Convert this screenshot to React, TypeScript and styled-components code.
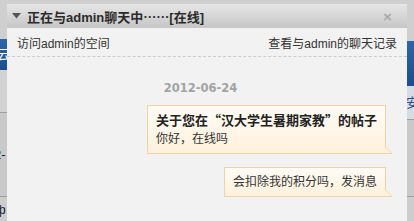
import styled, { createGlobalStyle } from "styled-components"

const GlobalStyle = createGlobalStyle`
  html, body {
    margin: 0;
    padding: 0;
    background: #cfcfcf;
  }
  body {
    font-family: "Liberation Sans", "Noto Sans CJK SC", sans-serif;
    font-size: 12px;
    color: #333;
  }
`

type StripProps = {
  $h: number
  $bg: string
  $line?: boolean
}

const Page = styled.div`
  position: relative;
  width: 414px;
  height: 221px;
  overflow: hidden;
  background: #cfcfcf;
`

const Backdrop = styled.div`
  display: grid;
  grid-template-columns: 7px 1fr 7px;
  height: 100%;
`

const SideColumn = styled.div`
  display: flex;
  flex-direction: column;
  overflow: hidden;
`

const Strip = styled.div<StripProps>`
  height: ${({ $h }) => $h}px;
  flex-shrink: 0;
  background: ${({ $bg }) => $bg};
  border-bottom: ${({ $line }) => ($line ? "1px solid #9e9e9e" : "none")};
  overflow: hidden;
  white-space: nowrap;
  font-size: 13px;
  line-height: ${({ $h }) => $h}px;
`

const BlueStrip = styled(Strip)`
  background: linear-gradient(#2f66a8, #1d4d8c);
  color: #fff;
`

const SideText = styled.span<{ $color: string; $shift: number }>`
  display: inline-block;
  margin-left: ${({ $shift }) => $shift}px;
  color: ${({ $color }) => $color};
`

const Window = styled.div`
  position: absolute;
  top: 4px;
  left: 7px;
  width: 400px;
  bottom: 0;
  background: #f2f2f2;
  display: flex;
  flex-direction: column;
`

const Header = styled.div`
  height: 24px;
  display: flex;
  align-items: center;
  padding: 0 14px 0 5px;
  background: linear-gradient(#e6e6e6, #c6c6c6);
`

const Title = styled.h2`
  margin: 0 0 0 6px;
  font-size: 13px;
  font-weight: bold;
  color: #2b2b2b;
  white-space: nowrap;
`

// full-width punctuation (quotes, ellipsis) drawn by the CJK face
const Cjk = styled.span`
  font-family: "Noto Sans CJK SC", sans-serif;
`

const CloseButton = styled.span`
  margin-left: auto;
  color: #a8a8a8;
  font-family: "DejaVu Sans", sans-serif;
  font-size: 13px;
  font-weight: bold;
  cursor: pointer;
`

const LinkRow = styled.div`
  height: 28px;
  display: flex;
  align-items: center;
  justify-content: space-between;
  padding: 0 10px 0 10px;
  border-bottom: 1px dashed #cccccc;
`

const Link = styled.a`
  color: #333;
  text-decoration: none;
  font-size: 12px;
  cursor: pointer;
`

const Messages = styled.div`
  display: flex;
  flex-direction: column;
  align-items: flex-end;
  padding: 23px 21px 0 0;
`

const DateLabel = styled.div`
  align-self: center;
  font-family: "DejaVu Sans", sans-serif;
  font-weight: bold;
  font-size: 11.5px;
  line-height: 16px;
  color: #a3a3a3;
  margin: 0 0 9px 8px;
`

const Bubble = styled.div`
  position: relative;
  padding: 5px 8px;
  border: 1px solid #efd3a6;
  background: linear-gradient(#fffcf6, #fff1dc);
  margin-bottom: 13px;
  line-height: 18px;
`

const BubbleTitle = styled.div`
  font-size: 13px;
  font-weight: bold;
  color: #222;
`

const BubbleText = styled.div`
  font-size: 12px;
  color: #333;
`

const Tail = styled.svg`
  position: absolute;
  right: -8px;
  bottom: -1px;
`

function BubbleTail() {
  return (
    <Tail width="9" height="9" viewBox="0 0 9 9">
      <path d="M0 0 L8 8 L0 8 Z" fill="#fff1dc" />
      <path d="M0.5 1 L7.5 8" stroke="#efd3a6" strokeWidth="1" fill="none" />
      <path d="M0 8.5 L8 8.5" stroke="#efd3a6" strokeWidth="1" />
    </Tail>
  )
}

export default function App() {
  return (
    <>
      <GlobalStyle />
      <Page>
        <Backdrop>
          <SideColumn>
            <Strip $h={39} $bg="#cfcfcf" />
            <BlueStrip $h={31} $bg="#2a5c9c">
              <SideText $color="#fff" $shift={-3}>云</SideText>
            </BlueStrip>
            <Strip $h={42} $bg="#d3d3d3" $line />
            <Strip $h={83} $bg="#c9c9c9" $line>
              <SideText $color="#222" $shift={-6}>2-</SideText>
            </Strip>
            <Strip $h={26} $bg="#cdcdcd">
              <SideText $color="#222" $shift={-5}>ф</SideText>
            </Strip>
          </SideColumn>
          <div />
          <SideColumn>
            <Strip $h={41} $bg="#cfcfcf" />
            <BlueStrip $h={45} $bg="#2a5c9c" />
            <Strip $h={33} $bg="#d6dce4" $line>
              <SideText $color="#2a4f85" $shift={-1}>安</SideText>
            </Strip>
            <Strip $h={76} $bg="#c9c9c9" $line />
            <Strip $h={26} $bg="#cdcdcd" />
          </SideColumn>
        </Backdrop>

        <Window>
          <Header>
            <svg width="9" height="6" viewBox="0 0 9 6">
              <path d="M0 0 L9 0 L4.5 5.5 Z" fill="#555" />
            </svg>
            <Title>
              正在与admin聊天中<Cjk>……</Cjk>[在线]
            </Title>
            <CloseButton>×</CloseButton>
          </Header>
          <LinkRow>
            <Link>访问admin的空间</Link>
            <Link>查看与admin的聊天记录</Link>
          </LinkRow>
          <Messages>
            <DateLabel>2012-06-24</DateLabel>
            <Bubble>
              <BubbleTitle>
                关于您在<Cjk>“</Cjk>汉大学生暑期家教<Cjk>”</Cjk>的帖子
              </BubbleTitle>
              <BubbleText>你好，在线吗</BubbleText>
              <BubbleTail />
            </Bubble>
            <Bubble>
              <BubbleText>会扣除我的积分吗，发消息</BubbleText>
              <BubbleTail />
            </Bubble>
          </Messages>
        </Window>
      </Page>
    </>
  )
}
